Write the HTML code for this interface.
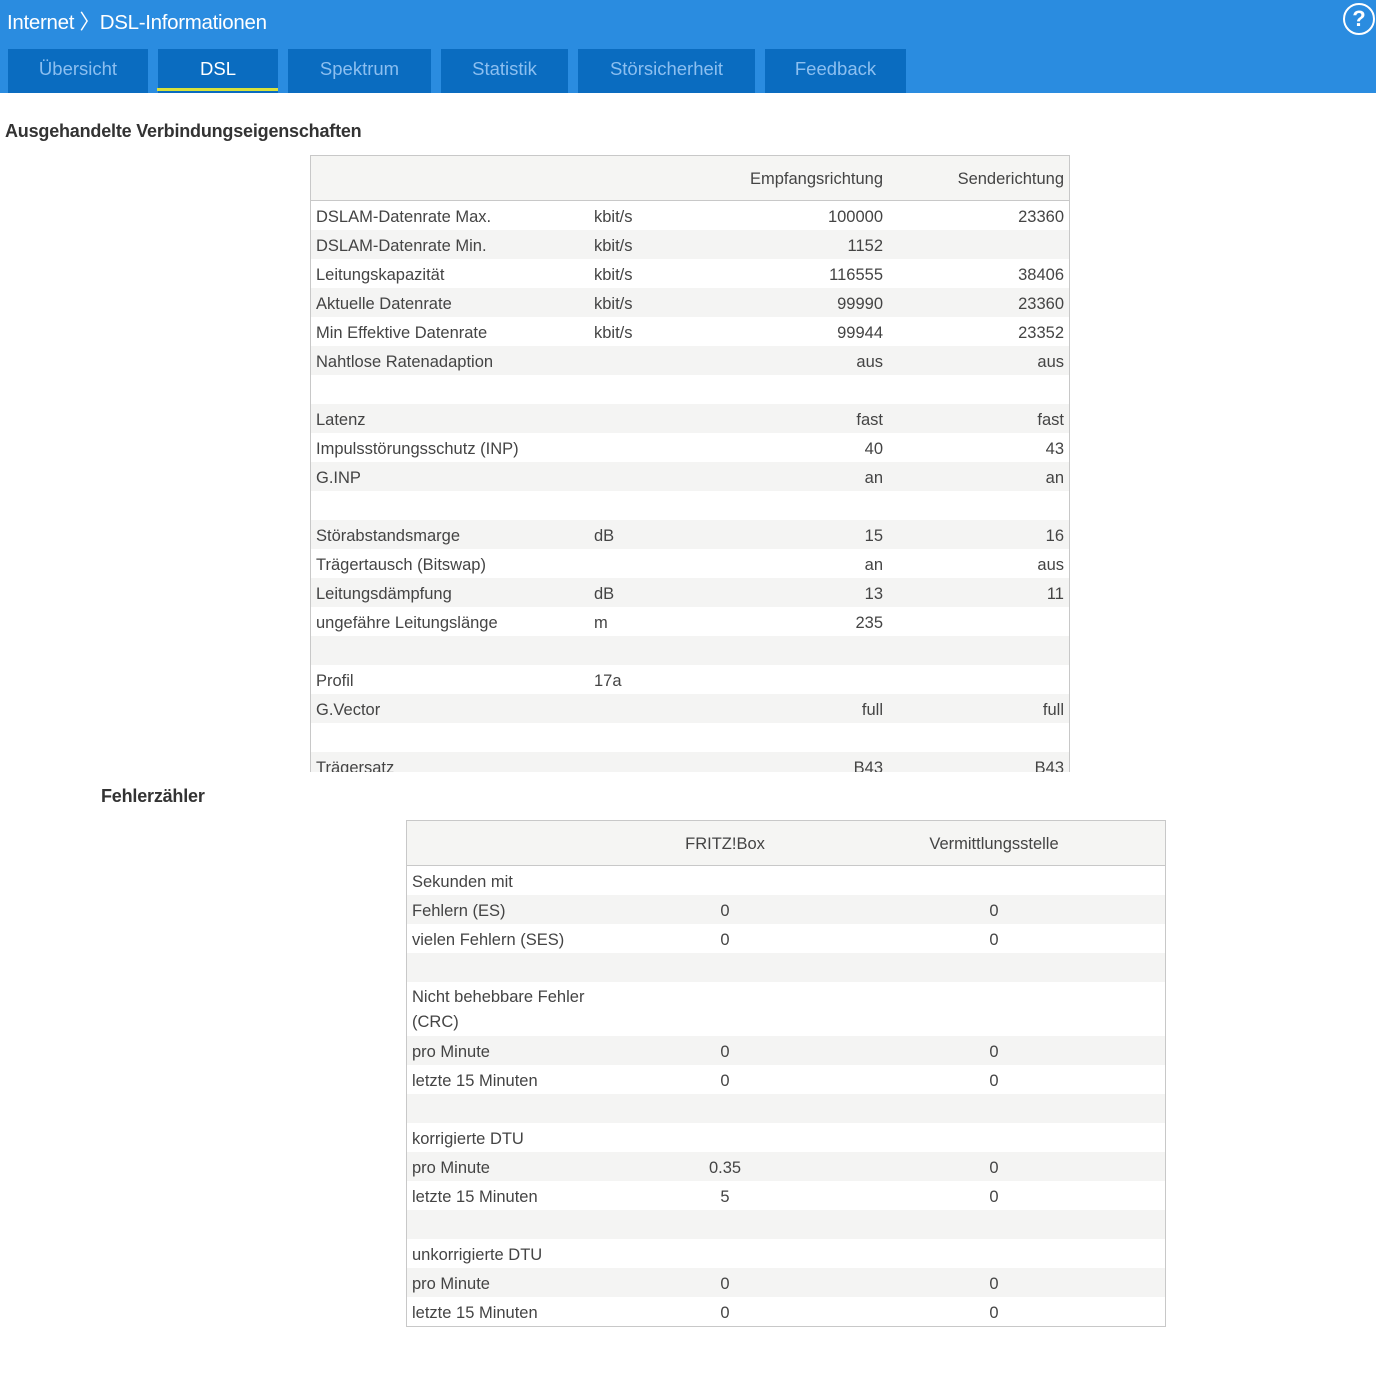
<!DOCTYPE html>
<html><head><meta charset="utf-8"><style>
*{margin:0;padding:0;box-sizing:border-box}
body{width:1376px;height:1388px;background:#fff;font-family:"Liberation Sans",sans-serif;color:#444;position:relative;overflow:hidden}
.top{position:absolute;left:0;top:0;width:1376px;height:93px;background:#2a8ce0}
.crumb{position:absolute;left:7px;top:5px;font-size:20.5px;color:#fff;letter-spacing:-0.3px}
.help{position:absolute;left:1343px;top:3px;width:32px;height:32px;border:2.5px solid #fff;border-radius:50%;color:#fff;font-weight:bold;font-size:22px;text-align:center;line-height:27px}
.tab{position:absolute;top:49px;height:44px;background:#0a6cc0;color:#8cbff0;font-size:18.5px;text-align:center;line-height:40px}
.tab.act{color:#fff}
.ul{position:absolute;left:157px;top:88px;width:121px;height:3px;background:#d8e23c}
h2{position:absolute;font-size:18px;font-weight:bold;color:#333;letter-spacing:-0.2px}
.box{position:absolute;border:1px solid #c8c8c8;overflow:hidden;font-size:16.5px}
.hd{height:45px;background:#f5f5f3;border-bottom:1px solid #c8c8c8;position:relative}
.r{height:29px;position:relative;line-height:29px;white-space:nowrap}
.r.g{background:#f4f4f3}
.r span{position:absolute;top:2px}
.hd span{position:absolute;top:14px}
.t1 .a{left:5px}.t1 .b{left:283px}.t1 .c{right:186px}.t1 .d{right:5px}
.t2 .a{left:5px}.t2 .c{left:318px;width:0;display:flex;justify-content:center}.t2 .d{left:587px;width:0;display:flex;justify-content:center}
</style></head><body>
<div class="top">
<div class="crumb">Internet 〉DSL-Informationen</div>
<div class="help">?</div>
<div class="tab" style="left:8px;width:140px">Übersicht</div>
<div class="tab act" style="left:158px;width:120px">DSL</div>
<div class="tab" style="left:288px;width:143px">Spektrum</div>
<div class="tab" style="left:441px;width:127px">Statistik</div>
<div class="tab" style="left:578px;width:177px">Störsicherheit</div>
<div class="tab" style="left:765px;width:141px">Feedback</div>
<div class="ul"></div>
</div>
<h2 style="left:5px;top:121px">Ausgehandelte Verbindungseigenschaften</h2>
<div class="box t1" style="left:310px;top:155px;width:760px;height:617px;border-bottom:none">
<div class="hd"><span class="c">Empfangsrichtung</span><span class="d">Senderichtung</span></div>
<div class="r"><span class="a">DSLAM-Datenrate Max.</span><span class="b">kbit/s</span><span class="c">100000</span><span class="d">23360</span></div>
<div class="r g"><span class="a">DSLAM-Datenrate Min.</span><span class="b">kbit/s</span><span class="c">1152</span></div>
<div class="r"><span class="a">Leitungskapazität</span><span class="b">kbit/s</span><span class="c">116555</span><span class="d">38406</span></div>
<div class="r g"><span class="a">Aktuelle Datenrate</span><span class="b">kbit/s</span><span class="c">99990</span><span class="d">23360</span></div>
<div class="r"><span class="a">Min Effektive Datenrate</span><span class="b">kbit/s</span><span class="c">99944</span><span class="d">23352</span></div>
<div class="r g"><span class="a">Nahtlose Ratenadaption</span><span class="c">aus</span><span class="d">aus</span></div>
<div class="r"></div>
<div class="r g"><span class="a">Latenz</span><span class="c">fast</span><span class="d">fast</span></div>
<div class="r"><span class="a">Impulsstörungsschutz (INP)</span><span class="c">40</span><span class="d">43</span></div>
<div class="r g"><span class="a">G.INP</span><span class="c">an</span><span class="d">an</span></div>
<div class="r"></div>
<div class="r g"><span class="a">Störabstandsmarge</span><span class="b">dB</span><span class="c">15</span><span class="d">16</span></div>
<div class="r"><span class="a">Trägertausch (Bitswap)</span><span class="c">an</span><span class="d">aus</span></div>
<div class="r g"><span class="a">Leitungsdämpfung</span><span class="b">dB</span><span class="c">13</span><span class="d">11</span></div>
<div class="r"><span class="a">ungefähre Leitungslänge</span><span class="b">m</span><span class="c">235</span></div>
<div class="r g"></div>
<div class="r"><span class="a">Profil</span><span class="b">17a</span></div>
<div class="r g"><span class="a">G.Vector</span><span class="c">full</span><span class="d">full</span></div>
<div class="r"></div>
<div class="r g"><span class="a">Trägersatz</span><span class="c">B43</span><span class="d">B43</span></div>
</div>
<h2 style="left:101px;top:786px">Fehlerzähler</h2>
<div class="box t2" style="left:406px;top:820px;width:760px;height:507px">
<div class="hd"><span class="c">FRITZ!Box</span><span class="d">Vermittlungsstelle</span></div>
<div class="r"><span class="a">Sekunden mit</span></div>
<div class="r g"><span class="a">Fehlern (ES)</span><span class="c">0</span><span class="d">0</span></div>
<div class="r"><span class="a">vielen Fehlern (SES)</span><span class="c">0</span><span class="d">0</span></div>
<div class="r g"></div>
<div class="r" style="height:54px;line-height:25px"><span class="a" style="top:3px">Nicht behebbare Fehler<br>(CRC)</span></div>
<div class="r g"><span class="a">pro Minute</span><span class="c">0</span><span class="d">0</span></div>
<div class="r"><span class="a">letzte 15 Minuten</span><span class="c">0</span><span class="d">0</span></div>
<div class="r g"></div>
<div class="r"><span class="a">korrigierte DTU</span></div>
<div class="r g"><span class="a">pro Minute</span><span class="c">0.35</span><span class="d">0</span></div>
<div class="r"><span class="a">letzte 15 Minuten</span><span class="c">5</span><span class="d">0</span></div>
<div class="r g"></div>
<div class="r"><span class="a">unkorrigierte DTU</span></div>
<div class="r g"><span class="a">pro Minute</span><span class="c">0</span><span class="d">0</span></div>
<div class="r"><span class="a">letzte 15 Minuten</span><span class="c">0</span><span class="d">0</span></div>
</div>
</body></html>
